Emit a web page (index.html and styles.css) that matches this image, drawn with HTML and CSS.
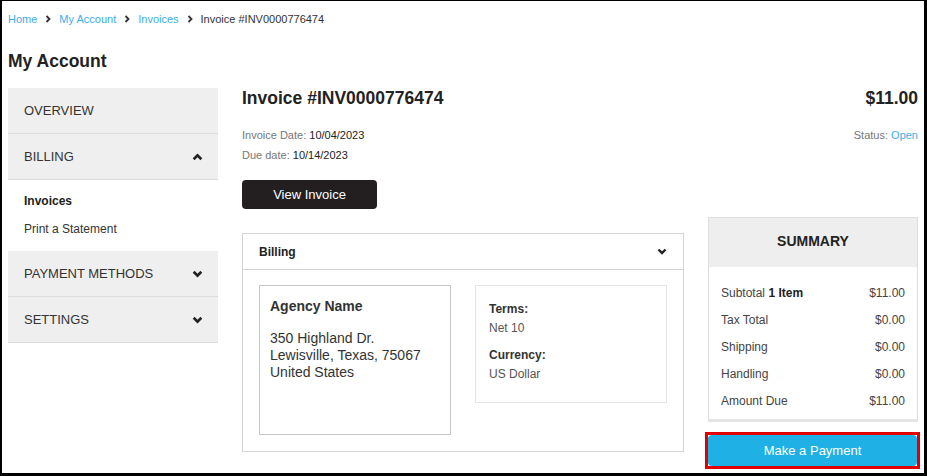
FILE: index.html
```html
<!DOCTYPE html>
<html lang="en">
<head>
  <meta charset="UTF-8">
  <meta name="viewport" content="width=device-width, initial-scale=1.0">
  <title>My Account - Invoice</title>
  <link rel="stylesheet" href="styles.css">
</head>
<body>
  <div class="page">
    <!-- Breadcrumb -->
    <nav class="breadcrumb">
      <a href="#">Home</a>
      <svg class="crumb-sep" viewBox="0 0 6 8" width="6" height="8"><polyline points="1.5,1 4.5,4 1.5,7" /></svg>
      <a href="#">My Account</a>
      <svg class="crumb-sep" viewBox="0 0 6 8" width="6" height="8"><polyline points="1.5,1 4.5,4 1.5,7" /></svg>
      <a href="#">Invoices</a>
      <svg class="crumb-sep" viewBox="0 0 6 8" width="6" height="8"><polyline points="1.5,1 4.5,4 1.5,7" /></svg>
      <span>Invoice #INV0000776474</span>
    </nav>

    <h1 class="page-title">My Account</h1>

    <div class="account">
      <!-- Sidebar menu -->
      <aside class="sidebar">
        <a href="#" class="side-item">OVERVIEW</a>
        <a href="#" class="side-item">BILLING
          <svg class="chev" viewBox="0 0 10 7" width="11" height="8"><polyline points="1.5,5.5 5,2 8.5,5.5" /></svg>
        </a>
        <div class="side-sub">
          <a href="#" class="active">Invoices</a>
          <a href="#">Print a Statement</a>
        </div>
        <a href="#" class="side-item">PAYMENT METHODS
          <svg class="chev" viewBox="0 0 10 7" width="11" height="8"><polyline points="1.5,1.5 5,5 8.5,1.5" /></svg>
        </a>
        <a href="#" class="side-item">SETTINGS
          <svg class="chev" viewBox="0 0 10 7" width="11" height="8"><polyline points="1.5,1.5 5,5 8.5,1.5" /></svg>
        </a>
      </aside>

      <!-- Invoice detail -->
      <main class="invoice">
        <h2 class="invoice-title">Invoice #INV0000776474</h2>
        <div class="invoice-total">$11.00</div>

        <div class="invoice-left">
          <div class="dates">
            <p><span class="label">Invoice Date:</span> 10/04/2023</p>
            <p><span class="label">Due date:</span> 10/14/2023</p>
          </div>
          <button class="view-btn">View Invoice</button>

          <section class="panel">
            <div class="panel-head">
              <span>Billing</span>
              <svg class="chev" viewBox="0 0 10 7" width="10" height="7"><polyline points="1.5,1.5 5,5 8.5,1.5" /></svg>
            </div>
            <div class="panel-body">
              <div class="address-box">
                <h3>Agency Name</h3>
                <p>350 Highland Dr.<br>Lewisville, Texas, 75067<br>United States</p>
              </div>
              <div class="terms-box">
                <h4>Terms:</h4>
                <p>Net 10</p>
                <h4>Currency:</h4>
                <p>US Dollar</p>
              </div>
            </div>
          </section>
        </div>

        <div class="invoice-right">
          <p class="status"><span class="label">Status:</span> <a href="#">Open</a></p>

          <div class="summary">
            <div class="summary-head">SUMMARY</div>
            <ul class="summary-rows">
              <li><span>Subtotal <b>1 Item</b></span><span>$11.00</span></li>
              <li><span>Tax Total</span><span>$0.00</span></li>
              <li><span>Shipping</span><span>$0.00</span></li>
              <li><span>Handling</span><span>$0.00</span></li>
              <li><span>Amount Due</span><span>$11.00</span></li>
            </ul>
          </div>

          <div class="pay-wrap">
            <button class="pay-btn">Make a Payment</button>
          </div>
        </div>
      </main>
    </div>
  </div>
</body>
</html>
```

FILE: styles.css
```css
/* Base Styling */
* {
  margin: 0;
  padding: 0;
  box-sizing: border-box;
}

body {
  font-family: "Liberation Sans", Arial, sans-serif;
  color: #333;
  background-color: #fff;
}

a {
  text-decoration: none;
}

/* Page frame */
.page {
  height: 100vh;
  border-style: solid;
  border-color: #000;
  border-width: 1px 3px 3px 2px;
  padding: 0 6px;
  overflow: hidden;
}

/* Breadcrumb */
.breadcrumb {
  display: flex;
  align-items: center;
  gap: 8px;
  height: 36px;
  font-size: 11px;
}

.breadcrumb a {
  color: #3daee9;
}

.breadcrumb span {
  color: #333;
}

.crumb-sep polyline {
  fill: none;
  stroke: #333;
  stroke-width: 1.8;
}

.page-title {
  font-size: 17.5px;
  font-weight: bold;
  color: #222;
  line-height: 22px;
  margin-top: 13px;
  margin-bottom: 16px;
}

/* Layout */
.account {
  display: flex;
  gap: 24px;
}

/* Sidebar */
.sidebar {
  width: 210px;
  flex-shrink: 0;
  display: flex;
  flex-direction: column;
}

.side-item {
  display: flex;
  align-items: center;
  justify-content: space-between;
  height: 46px;
  padding: 0 15px 0 16px;
  background-color: #efefef;
  border-bottom: 1px solid #dcdcdc;
  color: #333;
  font-size: 13px;
}

.chev polyline {
  fill: none;
  stroke: #222;
  stroke-width: 2.4;
}

.side-sub {
  display: flex;
  flex-direction: column;
  padding: 7px 16px 8px;
}

.side-sub a {
  color: #333;
  font-size: 12px;
  line-height: 28px;
}

.side-sub a.active {
  font-weight: bold;
  color: #222;
}

/* Invoice detail */
.invoice {
  flex: 1;
  display: grid;
  grid-template-columns: 1fr 210px;
  column-gap: 24px;
  align-items: start;
}

.invoice-title {
  font-size: 17.5px;
  font-weight: bold;
  color: #222;
  line-height: 20px;
}

.invoice-total {
  font-size: 17.5px;
  font-weight: bold;
  color: #222;
  line-height: 20px;
  text-align: right;
}

.dates {
  margin-top: 17px;
  font-size: 11px;
  line-height: 20px;
  color: #222;
}

.label {
  color: #777;
}

.view-btn {
  display: block;
  margin-top: 15px;
  width: 135px;
  height: 29px;
  border: none;
  border-radius: 4px;
  background-color: #231f20;
  color: #fff;
  font-family: inherit;
  font-size: 13px;
  cursor: pointer;
}

/* Billing panel */
.panel {
  margin-top: 24px;
  border: 1px solid #d4d4d4;
}

.panel-head {
  display: flex;
  align-items: center;
  justify-content: space-between;
  height: 36px;
  padding: 0 16px;
  border-bottom: 1px solid #d4d4d4;
  font-size: 12px;
  font-weight: bold;
  color: #222;
}

.panel-body {
  display: flex;
  gap: 24px;
  padding: 15px 16px 16px;
}

.address-box {
  width: 192px;
  height: 150px;
  border: 1px solid #c8c8c8;
  padding: 10px 10px;
}

.address-box h3 {
  font-size: 14px;
  font-weight: bold;
  color: #333;
  line-height: 20px;
  margin-bottom: 14px;
}

.address-box p {
  font-size: 14px;
  line-height: 17px;
  color: #333;
}

.terms-box {
  width: 192px;
  height: 118px;
  border: 1px solid #e4e4e4;
  padding: 14px 13px 12px;
}

.terms-box h4 {
  font-size: 12px;
  font-weight: bold;
  color: #333;
  line-height: 19px;
}

.terms-box p {
  font-size: 12px;
  color: #555;
  line-height: 19px;
  margin-bottom: 8px;
}

/* Right column */
.status {
  margin-top: 17px;
  font-size: 11px;
  line-height: 20px;
  text-align: right;
}

.status a {
  color: #3daee9;
}

.summary {
  margin-top: 72px;
  border: 1px solid #dedede;
  border-bottom: 3px solid #e4e4e4;
}

.summary-head {
  height: 49px;
  padding-top: 14px;
  line-height: 18px;
  text-align: center;
  background-color: #eee;
  font-size: 14px;
  font-weight: bold;
  color: #222;
}

.summary-rows {
  list-style: none;
  padding: 13px 12px 4px;
}

.summary-rows li {
  display: flex;
  justify-content: space-between;
  font-size: 12px;
  line-height: 27px;
  color: #444;
}

.summary-rows b {
  color: #222;
}

/* Payment button */
.pay-wrap {
  margin: 10px -2px 0 -3px;
  border: 3px solid #e10000;
}

.pay-btn {
  display: block;
  width: 100%;
  height: 31px;
  border: none;
  border-radius: 4px;
  background-color: #1fb1e6;
  color: #fff;
  font-family: inherit;
  font-size: 13px;
  cursor: pointer;
}
```
